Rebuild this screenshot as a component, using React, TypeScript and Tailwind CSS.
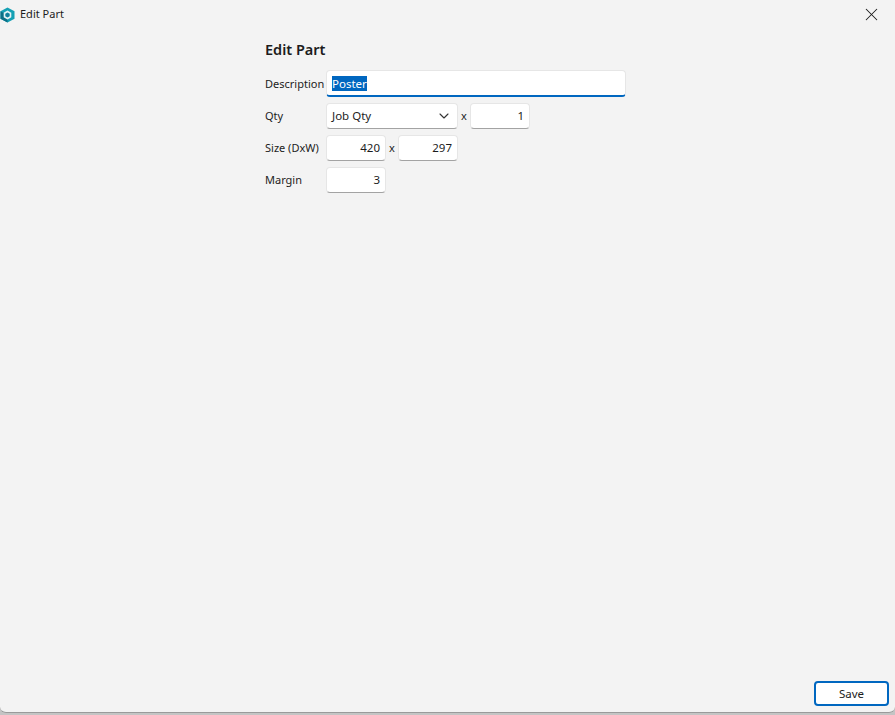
import { ChevronDown, X } from "lucide-react";
import type { ReactNode } from "react";

const FONT = "font-['Noto_Sans','Open_Sans',sans-serif]";

function Field({ value }: { value: string }) {
  return (
    <div className="flex h-[26px] w-[60px] items-center justify-end rounded-[4px] border border-[#e6e6e6] border-b-[#a3a3a3] bg-white pr-[4px] pl-[4px] text-[11.5px] text-[#1c1c1c]">
      <span className="pr-px">{value}</span>
    </div>
  );
}

function Row({ label, children }: { label: string; children: ReactNode }) {
  return (
    <div className="flex items-end">
      <span className="w-[61px] shrink-0 text-[11px] leading-[26px] whitespace-nowrap text-[#1c1c1c]">{label}</span>
      {children}
    </div>
  );
}

function Times() {
  return <span className="w-[12px] text-center text-[11px] leading-[26px] text-[#1c1c1c]">x</span>;
}

export default function App() {
  return (
    <div className={`${FONT} h-[715px] w-[895px] overflow-hidden bg-[#c4c4c4]`}>
      <div className="flex h-[713px] flex-col rounded-b-[6px] border-b border-[#9a9a9a] bg-[#f3f3f3]">
        <header className="flex h-[29px] shrink-0 items-center justify-between pr-[13px]">
          <div className="flex items-center gap-[5px]">
            <svg width="15" height="16" viewBox="0 0 15 16">
              <path d="M7.5 0.5 14.5 4.3V11.7L7.5 15.5 0.5 11.7V4.3Z" fill="#14a0b4" />
              <path d="M0.5 4.3 7.5 8V15.5L0.5 11.7Z" fill="#0b6f86" />
              <path d="M7.5 3.6 11.3 5.8V10.2L7.5 12.4 3.7 10.2V5.8Z" fill="#e4f3f6" />
              <path d="M7.5 5.5 9.7 6.8V9.3L7.5 10.6 5.3 9.3V6.8Z" fill="#0f7f9c" />
            </svg>
            <span className="text-[11px] text-[#1c1c1c]">Edit Part</span>
          </div>
          <X size={21} strokeWidth={1.2} className="text-[#1c1c1c]" />
        </header>

        <main className="flex flex-1 flex-col pl-[265px]">
          <h1 className="mt-[9px] text-[14.5px] leading-[22px] font-semibold text-[#1c1c1c]">Edit Part</h1>
          <div className="mt-[10px] flex flex-col gap-[6px]">
            <Row label="Description">
              <div className="flex h-[27px] w-[300px] items-center rounded-[4px] border border-[#e6e6e6] border-b-2 border-b-[#0067c0] bg-white pl-[5px] text-[11.5px]">
                <span className="inline-block bg-[#0067c0] leading-[15px] text-white">Poster</span>
              </div>
            </Row>
            <Row label="Qty">
              <div className="flex h-[26px] w-[132px] items-center justify-between rounded-[4px] border border-[#e6e6e6] border-b-[#a3a3a3] bg-white pr-[5px] pl-[5px] text-[11.5px] text-[#1c1c1c]">
                <span>Job Qty</span>
                <ChevronDown size={16} strokeWidth={1.6} className="text-[#333333]" />
              </div>
              <Times />
              <Field value="1" />
            </Row>
            <Row label="Size (DxW)">
              <Field value="420" />
              <Times />
              <Field value="297" />
            </Row>
            <Row label="Margin">
              <Field value="3" />
            </Row>
          </div>
        </main>

        <footer className="flex shrink-0 justify-end pr-[6px] pb-[6px]">
          <button className="flex h-[25px] w-[75px] items-center justify-center rounded-[4px] border-2 border-[#0067c0] bg-white text-[11.5px] text-[#1c1c1c]">
            Save
          </button>
        </footer>
      </div>
    </div>
  );
}
